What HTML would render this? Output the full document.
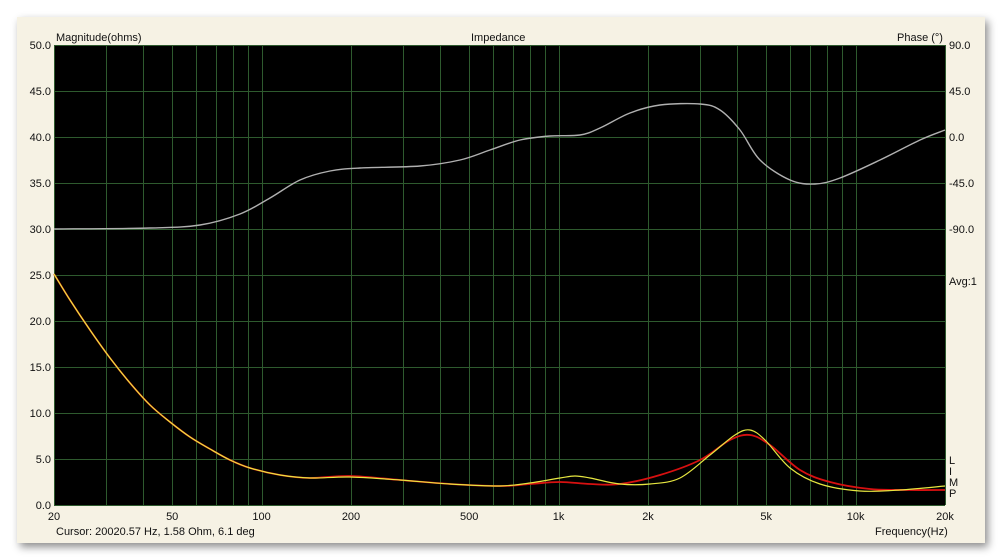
<!DOCTYPE html>
<html><head><meta charset="utf-8"><style>
html,body{margin:0;padding:0;background:#fff;width:1000px;height:558px;overflow:hidden}
#panel{position:absolute;left:17px;top:17px;width:968px;height:526px;background:#f6f2e4;box-shadow:3px 4px 8px rgba(0,0,0,0.45)}
svg{position:absolute;left:0;top:0}
text{font-family:"Liberation Sans",sans-serif;font-size:11px;fill:#111}
</style></head><body>
<div id="panel"></div>
<svg width="1000" height="558" id="s">
<rect x="54" y="45" width="891" height="460" fill="#000"/>
<g id="grid" stroke="#2e5a2e" stroke-width="1"></g>
<g id="lbl"></g>
<path id="pg" fill="none" stroke="#b0b0b0" stroke-width="1.4"/>
<path id="pr" fill="none" stroke="#d81010" stroke-width="1.8"/>
<path id="py" fill="none" stroke="#e6e640" stroke-width="1.2"/>
<text x="56" y="41">Magnitude(ohms)</text>
<text x="471" y="41">Impedance</text>
<text x="897" y="41">Phase (°)</text>
<text x="949" y="285">Avg:1</text>
<text x="949" y="464">L</text><text x="949" y="475">I</text><text x="949" y="486">M</text><text x="949" y="497">P</text>
<text x="56" y="535">Cursor: 20020.57 Hz, 1.58 Ohm, 6.1 deg</text>
<text x="875" y="535">Frequency(Hz)</text>
</svg>
<script>
var g=document.getElementById('grid'),l=document.getElementById('lbl'),ns='http://www.w3.org/2000/svg';
function ln(x1,y1,x2,y2){var e=document.createElementNS(ns,'line');e.setAttribute('x1',x1);e.setAttribute('y1',y1);e.setAttribute('x2',x2);e.setAttribute('y2',y2);g.appendChild(e);}
function tx(x,y,t,a){var e=document.createElementNS(ns,'text');e.setAttribute('x',x);e.setAttribute('y',y);if(a)e.setAttribute('text-anchor',a);e.textContent=t;l.appendChild(e);}
function X(f){return 54+297*Math.log10(f/20);}
[20,30,40,50,60,70,80,90,100,200,300,400,500,600,700,800,900,1000,2000,3000,4000,5000,6000,7000,8000,9000,10000,20000].forEach(function(f){var x=Math.round(X(f))+0.5;ln(x,45,x,505);});
for(var i=0;i<=10;i++){var y=Math.round(45+46*i)+0.5;ln(54,y,945,y);tx(51,49+46*i,(50-5*i).toFixed(1),'end');}
var ph=['90.0','45.0','0.0','-45.0','-90.0'];for(var i=0;i<5;i++)tx(949,49+46*i,ph[i]);
var fl=[[20,'20'],[50,'50'],[100,'100'],[200,'200'],[500,'500'],[1000,'1k'],[2000,'2k'],[5000,'5k'],[10000,'10k'],[20000,'20k']];
fl.forEach(function(p){tx(X(p[0]),520,p[1],'middle');});
function sm(id,s){var a=s.trim().split(/\s+/).map(function(p){return p.split(',').map(Number);});var d='M'+a[0].join(',');
for(var i=0;i<a.length-1;i++){var p0=a[i-1]||a[i],p1=a[i],p2=a[i+1],p3=a[i+2]||p2;
d+=' C'+(p1[0]+(p2[0]-p0[0])/6)+','+(p1[1]+(p2[1]-p0[1])/6)+' '+(p2[0]-(p3[0]-p1[0])/6)+','+(p2[1]-(p3[1]-p1[1])/6)+' '+p2[0]+','+p2[1];}
document.getElementById(id).setAttribute('d',d);}
sm('pg',"54,229 150,228 200,225 240,214 270,198 300,180 330,171 360,168 420,166 460,160 490,150 520,140 550,136 580,135 600,128 630,113 660,105 700,104 720,110 740,130 760,160 790,180 815,184 840,178 880,160 920,140 945,130");
sm('pr',"54,274 70,300 90,330 110,358 130,383 150,405 170,422 190,437 210,449 230,460 250,468 280,475 310,478 350,476 400,480 450,484 500,486 530,484 560,482 590,484 620,484 660,475 700,460 730,440 750,435 770,445 800,470 830,482 870,489 910,490 945,490");
sm('py',"54,274 70,300 90,330 110,358 130,383 150,405 170,422 190,437 210,449 230,460 250,468 280,475 310,478 350,477 400,480 450,484 500,486 530,483 560,478 575,476 590,478 620,484 650,484 680,478 710,455 735,435 750,430 765,440 790,468 820,484 860,491 900,490 945,486");
</script>
</body></html>
